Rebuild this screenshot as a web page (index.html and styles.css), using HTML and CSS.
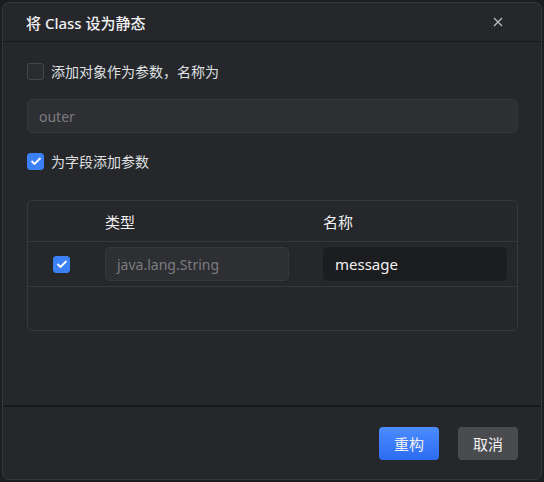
FILE: index.html
```html
<!DOCTYPE html>
<html lang="zh-CN">
<head>
    <meta charset="UTF-8">
    <title>将 Class 设为静态</title>
    <link rel="stylesheet" href="styles.css">
</head>
<body>
    <div class="dialog">
        <!-- Header -->
        <div class="dialog-header">
            <span class="dialog-title">将 Class 设为静态</span>
            <span class="close-btn">
                <svg width="10" height="10" viewBox="0 0 10 10"><path d="M1 1L9 9M9 1L1 9" stroke="#b8b9bc" stroke-width="1.4" fill="none"/></svg>
            </span>
        </div>

        <!-- Body -->
        <div class="dialog-body">
            <label class="check-row">
                <span class="checkbox"></span>
                <span>添加对象作为参数，名称为</span>
            </label>
            <div class="text-input placeholder">outer</div>
            <label class="check-row">
                <span class="checkbox checked">
                    <svg width="12" height="10" viewBox="0 0 12 10"><path d="M1.5 5L4.5 8L10.5 2" stroke="#fff" stroke-width="1.8" fill="none"/></svg>
                </span>
                <span>为字段添加参数</span>
            </label>

            <div class="param-table">
                <div class="table-head">
                    <div></div>
                    <div>类型</div>
                    <div>名称</div>
                </div>
                <div class="table-row">
                    <div class="cell-check">
                        <span class="checkbox checked">
                            <svg width="12" height="10" viewBox="0 0 12 10"><path d="M1.5 5L4.5 8L10.5 2" stroke="#fff" stroke-width="1.8" fill="none"/></svg>
                        </span>
                    </div>
                    <div class="text-input small placeholder">java.lang.String</div>
                    <div class="text-input small dark">message</div>
                </div>
                <div class="table-empty"></div>
            </div>
        </div>

        <!-- Footer -->
        <div class="dialog-footer">
            <button class="btn primary">重构</button>
            <button class="btn">取消</button>
        </div>
    </div>
</body>
</html>
```

FILE: styles.css
```css
* {
    margin: 0;
    padding: 0;
    box-sizing: border-box;
}
body {
    width: 544px;
    height: 482px;
    padding: 2px;
    background: #1c1d20;
    font-family: 'Noto Sans', 'Noto Sans CJK SC', sans-serif;
    color: #dfe0e2;
    font-size: 14px;
    overflow: hidden;
}
.dialog {
    width: 540px;
    height: 478px;
    background: #26272a;
    border: 1px solid #36373b;
    border-radius: 7px;
    display: flex;
    flex-direction: column;
}
/* Header */
.dialog-header {
    height: 39px;
    border-bottom: 1px solid #18191b;
    display: flex;
    align-items: center;
    justify-content: space-between;
    padding: 0 38px 0 23px;
}
.dialog-title {
    font-size: 15px;
    font-weight: 500;
    color: #f0f0f2;
}
.close-btn {
    display: flex;
}
/* Body */
.dialog-body {
    flex: 1;
    padding: 20px 23px 0 24px;
    display: flex;
    flex-direction: column;
    border-bottom: 2px solid #18191b;
}
.check-row {
    display: flex;
    align-items: center;
    gap: 7px;
    height: 18px;
}
.checkbox {
    width: 17px;
    height: 17px;
    border: 1px solid #46474b;
    border-radius: 3px;
    background: #2a2b2e;
    display: flex;
    align-items: center;
    justify-content: center;
}
.checkbox.checked {
    background: #3b80f5;
    border-color: #3b80f5;
}
.text-input {
    height: 34px;
    margin: 19px 0 19px;
    padding: 0 11px;
    background: #2e2f33;
    border: 1px solid #36373c;
    border-radius: 5px;
    display: flex;
    align-items: center;
}
.placeholder {
    color: #7b7c80;
}
/* Parameter table */
.param-table {
    margin-top: 30px;
    border: 1px solid #37383c;
    border-radius: 5px;
}
.table-head,
.table-row {
    display: grid;
    grid-template-columns: 77px 218px 1fr;
}
.table-head {
    height: 41px;
    align-items: center;
    border-bottom: 1px solid #37383c;
    font-size: 15px;
    color: #f0f0f2;
}
.table-row {
    height: 45px;
    align-items: center;
    border-bottom: 1px solid #37383c;
}
.cell-check {
    display: flex;
    padding-left: 25px;
}
.text-input.small {
    width: 184px;
    margin: 0;
    font-size: 14px;
}
.text-input.dark {
    background: #1c1d1f;
    border-color: #1c1d1f;
    color: #f2f2f4;
    font-size: 15px;
}
.table-empty {
    height: 43px;
}
/* Footer */
.dialog-footer {
    height: 72px;
    display: flex;
    align-items: center;
    justify-content: flex-end;
    gap: 19px;
    padding-right: 23px;
}
.btn {
    width: 60px;
    height: 33px;
    border: none;
    border-radius: 4px;
    background: #4a4b4f;
    color: #f2f2f4;
    font-family: inherit;
    font-size: 15px;
}
.btn.primary {
    background: linear-gradient(#4b8cff, #2c6cf2);
}
```
